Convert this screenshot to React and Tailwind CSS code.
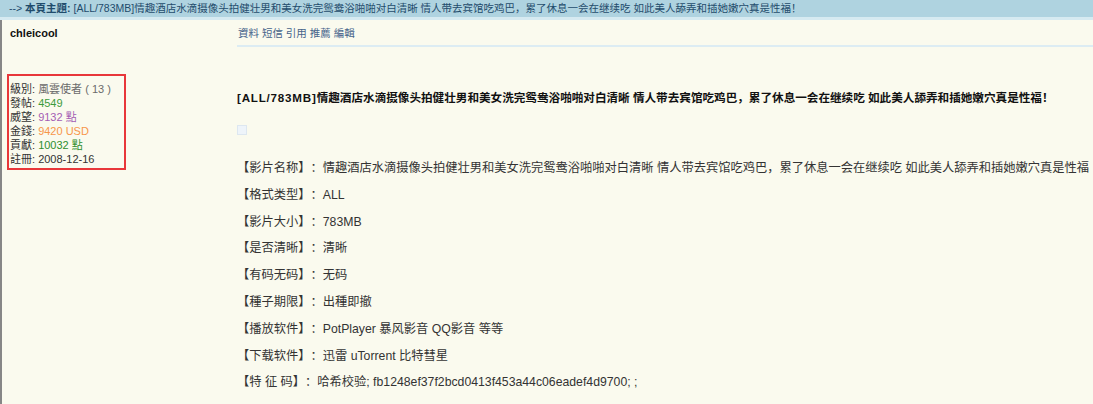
const title =
  '[ALL/783MB]情趣酒店水滴摄像头拍健壮男和美女洗完鸳鸯浴啪啪对白清晰 情人带去宾馆吃鸡巴，累了休息一会在继续吃 如此美人舔弄和插她嫩穴真是性福！';

const stats = [
  { label: '級別', value: '風雲使者 ( 13 )', color: 'text-[#6b6b6b]' },
  { label: '發帖', value: '4549', color: 'text-[#3c9a3c]' },
  { label: '威望', value: '9132 點', color: 'text-[#a45db3]' },
  { label: '金錢', value: '9420 USD', color: 'text-[#f7964a]' },
  { label: '貢獻', value: '10032 點', color: 'text-[#2f8f2f]' },
  { label: '註冊', value: '2008-12-16', color: 'text-[#333]' },
];

const rows = [
  ['影片名称', '情趣酒店水滴摄像头拍健壮男和美女洗完鸳鸯浴啪啪对白清晰 情人带去宾馆吃鸡巴，累了休息一会在继续吃 如此美人舔弄和插她嫩穴真是性福'],
  ['格式类型', 'ALL'],
  ['影片大小', '783MB'],
  ['是否清晰', '清晰'],
  ['有码无码', '无码'],
  ['種子期限', '出種即撤'],
  ['播放软件', 'PotPlayer 暴风影音 QQ影音 等等'],
  ['下载软件', '迅雷 uTorrent 比特彗星'],
  ['特 征 码', '哈希校验; fb1248ef37f2bcd0413f453a44c06eadef4d9700; ;'],
];

const sc = { fontFamily: '"Liberation Sans", "Noto Sans CJK SC", sans-serif' };
const tc = { fontFamily: '"Liberation Sans", "Noto Sans CJK TC", sans-serif' };

export default function App() {
  return (
    <div className="h-[404px] w-full overflow-hidden bg-[#fafaee] [text-spacing-trim:space-all]" style={sc}>
      {/* topic bar */}
      <div className="h-[20px] bg-[#afd3e0] border-b-[3px] border-[#d6eaf1] pl-[9px] text-[10.5px] leading-[17px] text-[#1f4c6c] whitespace-nowrap" style={tc}>
        <span>--&gt; </span>
        <span className="font-bold">本頁主題:</span>
        <span style={sc}> {title}</span>
      </div>

      <div className="flex h-full border-l-2 border-[#868686]">
        {/* author column */}
        <div className="w-[235px] shrink-0 pl-[5px] pt-[6px]" style={tc}>
          <div className="pl-[3px] text-[11px] font-bold leading-[14px] text-[#111]">chleicool</div>
          <div className="mt-[34px] w-[119px] border-2 border-[#e8373a] pl-[1px] pt-[6px] pb-[2px] text-[11px] leading-[14px] whitespace-nowrap">
            {stats.map((s) => (
              <div key={s.label} className="text-[#333]">
                {s.label}: <span className={s.color}>{s.value}</span>
              </div>
            ))}
          </div>
        </div>

        {/* post column */}
        <div className="flex-1 min-w-0 overflow-hidden">
          <div className="pt-[6px] pb-[5px] border-b-2 border-[#dcecf3] text-[10.5px] leading-[14px] text-[#46638a] pl-[1px]" style={tc}>
            <span>資料</span> <span>短信</span> <span>引用</span> <span>推薦</span> <span>編輯</span>
          </div>

          <div className="mt-[43px] text-[11.6px] font-bold leading-[16px] text-[#111] whitespace-nowrap">
            <span className="tracking-[0.8px]">[ALL/783MB]</span>
            {title.slice(11)}
          </div>

          <div className="mt-[19px] h-[10px] w-[10px] border border-[#dde7f0] bg-[#eef4fa]" />

          <div className="mt-[20px] text-[12.25px] leading-[26.8px] text-[#333] whitespace-nowrap">
            {rows.map(([k, v]) => (
              <div key={k}>
                【{k}】：{v}
              </div>
            ))}
          </div>
        </div>
      </div>
    </div>
  );
}
